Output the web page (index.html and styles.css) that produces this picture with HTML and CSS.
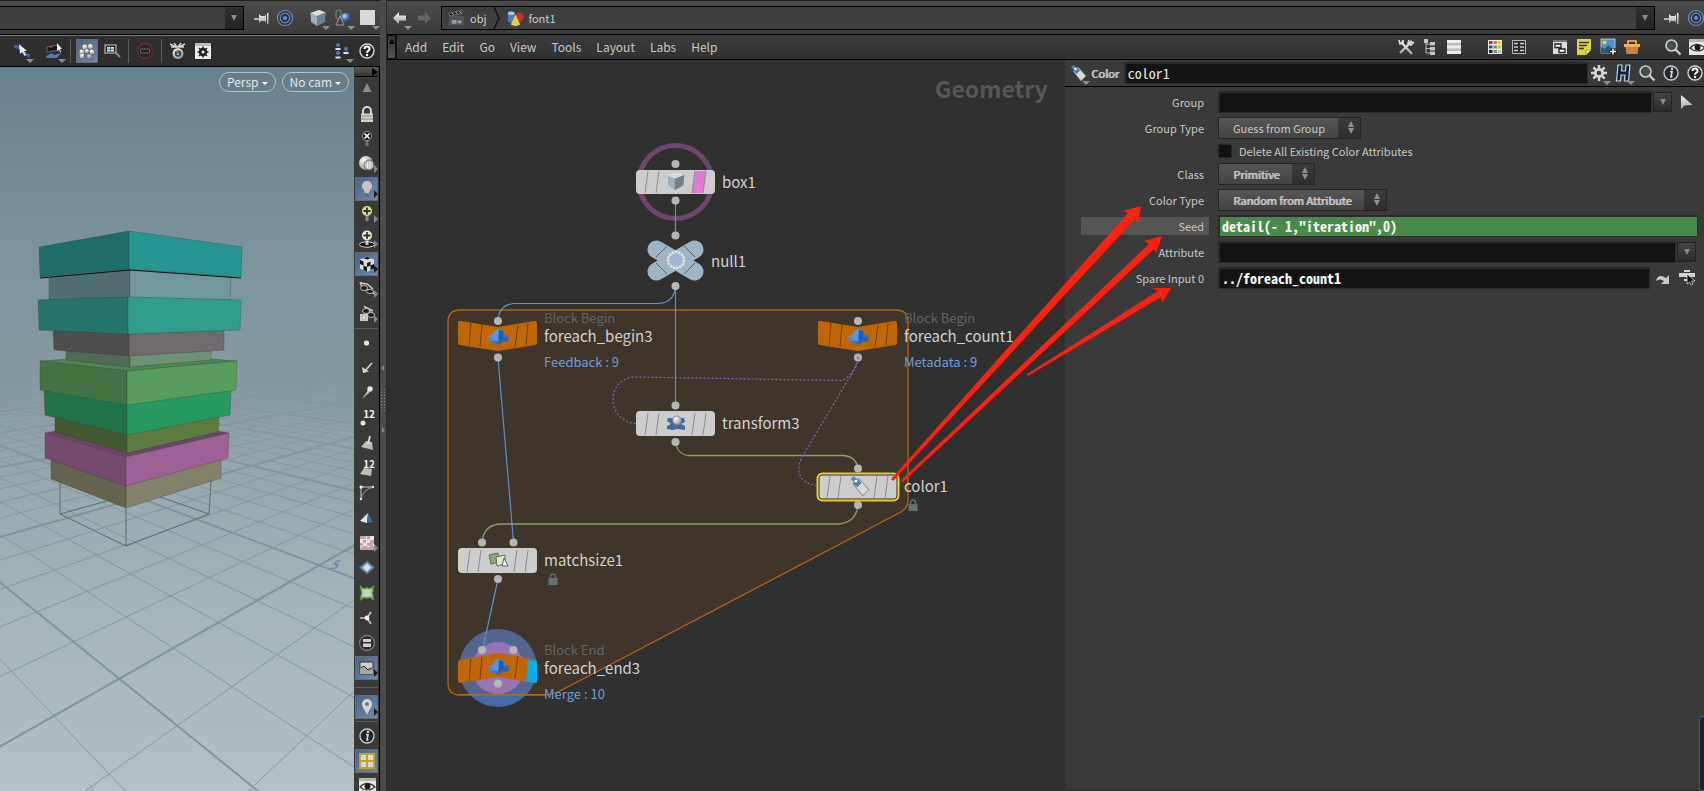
FILE: index.html
```html
<!DOCTYPE html>
<html lang="en">
<head>
<meta charset="utf-8">
<title>Geometry network – color1</title>
<link rel="stylesheet" href="styles.css">
</head>
<body>
<svg class="defs" aria-hidden="true">
  <defs>
    <linearGradient id="metal" x1="0" y1="0" x2="0" y2="1"><stop offset="0" stop-color="#f4f4f0"/><stop offset="1" stop-color="#a9a9a4"/></linearGradient>
    <linearGradient id="blueBox" x1="0" y1="0" x2="1" y2="1"><stop offset="0" stop-color="#6aa6ea"/><stop offset="1" stop-color="#1c4f9c"/></linearGradient>
    <radialGradient id="ball" cx=".35" cy=".3" r=".8"><stop offset="0" stop-color="#c8dcf8"/><stop offset=".5" stop-color="#3a68b8"/><stop offset="1" stop-color="#14305f"/></radialGradient>
    <radialGradient id="white" cx=".35" cy=".3" r=".8"><stop offset="0" stop-color="#fff"/><stop offset="1" stop-color="#8b8b86"/></radialGradient>
    <symbol id="pin" viewBox="0 0 18 18"><path d="M1 10h6" stroke="#d8d8d8" stroke-width="1.5"/><path d="M6 5l2 2h4l1.500-3h2v11h-2l-1.500-3H8l-2 2z" fill="url(#metal)"/><path d="M13.500 4v11" stroke="#222" stroke-width=".8"/></symbol>
    <symbol id="target" viewBox="0 0 18 18"><g fill="none" stroke="#6f8dc0" stroke-width="1.200"><circle cx="9" cy="9" r="7.500" fill="#2c3440"/><circle cx="9" cy="9" r="4.800"/></g><circle cx="9" cy="9" r="2" fill="#5f93e6"/></symbol>
    <symbol id="cube" viewBox="0 0 18 18"><path d="M1.500 4L10 1l6.500 2.500L15.500 13 8 17 2 13z" fill="#9fb0ba"/><path d="M1.500 4L10 1l6.500 2.500L8 7z" fill="#d3dfe6"/><path d="M8 7l8.500-3.500L15.500 13 8 17z" fill="#71808a"/></symbol>
    <symbol id="shapes" viewBox="0 0 18 18"><rect x="2" y="1" width="5" height="9" rx="2" fill="#444" stroke="#888"/><circle cx="12" cy="9" r="5" fill="url(#ball)"/><path d="M6 7l4 9H2z" fill="#444" fill-opacity=".7" stroke="#999"/></symbol>
    <symbol id="square" viewBox="0 0 18 18"><path d="M1 1h15v15H1z" fill="#d9dad7"/></symbol>
    <symbol id="snapline" viewBox="0 0 18 18"><path d="M1 4l6 2 5 6 5 2" fill="none" stroke="#3b66a5" stroke-width="3"/><path d="M6 2l1 10 2.500-2 2 4 1.500-1-2-4h3z" fill="#ececec"/></symbol>
    <symbol id="snapplane" viewBox="0 0 18 18"><path d="M1 14l6-3 2 2 7-2-4 5H2z" fill="#4e7dc2"/><path d="M2 5l12-2v5L2 10z" fill="#161616" stroke="#666"/><circle cx="6" cy="5" r="1" fill="#e33"/><path d="M12 1v8l2-1.500 1 3 1-.5-1-3h2z" fill="#ececec"/></symbol>
    <symbol id="balls" viewBox="0 0 18 18"><g fill="url(#white)" stroke="#555" stroke-width=".6"><circle cx="7" cy="5" r="3"/><circle cx="12.500" cy="4.500" r="3"/><circle cx="4" cy="10" r="3"/><circle cx="14" cy="10" r="3"/><circle cx="9" cy="9" r="2.500"/><path d="M1 12l5-1v5l-4 1zM9 12h5v5H9z"/></g></symbol>
    <symbol id="zoombox" viewBox="0 0 18 18"><path d="M2 3h11v8H2z" fill="#222" stroke="#999" stroke-width="1.500"/><path d="M4 5h7v4.500H4z" fill="#dfe9f6"/><path d="M7.500 5v4.500M4 7.200h7" stroke="#3a67b0"/><path d="M13 11l4 4" stroke="#888" stroke-width="2"/></symbol>
    <symbol id="stop" viewBox="0 0 18 18"><circle cx="9" cy="9" r="7.500" fill="#2b2526" stroke="#6b2e2e" stroke-width="1.300"/><path d="M4.500 7h9v4h-9z" fill="#222" stroke="#666"/></symbol>
    <symbol id="lens" viewBox="0 0 18 18"><path d="M1 2l6 3M5 1l3 4M16 2l-6 3M12 1L9 5M2 5h13" stroke="#d8d8d0" stroke-width="1.400"/><circle cx="9" cy="11.500" r="5.500" fill="url(#white)"/><circle cx="9" cy="11.500" r="3.200" fill="#24455c"/><path d="M7 10a3 3 0 013-1" stroke="#e87444" fill="none" stroke-width="1.300"/><circle cx="9" cy="12" r="1.300" fill="#77b6d9"/></symbol>
    <symbol id="gearbox" viewBox="0 0 18 18"><path d="M1 1h16v16H1z" fill="#ececea"/><path d="M1 1h16v3H1z" fill="#bbb"/><circle cx="9" cy="10" r="3.200" fill="none" stroke="#222" stroke-width="2"/><path d="M9 4.500v11M3.500 10h11M5 6l8 8M13 6l-8 8" stroke="#222" stroke-width="1.500"/><circle cx="9" cy="10" r="1.500" fill="#ececea"/></symbol>
    <symbol id="people" viewBox="0 0 18 18"><g fill="#4f78b9"><circle cx="5" cy="3" r="2"/><circle cx="5" cy="11" r="2"/><circle cx="13" cy="7" r="2"/></g><path d="M2.500 7h5M2.500 15.500h5M10.500 11h5" stroke="#dfe6ef" stroke-width="2"/></symbol>
    <symbol id="help" viewBox="0 0 18 18"><circle cx="9" cy="9" r="7" fill="#20262a" stroke="#d6d6d2" stroke-width="1.400"/><path d="M6.500 7a2.500 2.500 0 115 .2c0 1.600-2.500 1.500-2.500 3.500" fill="none" stroke="#fff" stroke-width="2"/><circle cx="9" cy="13" r="1.200" fill="#fff"/></symbol>
    <symbol id="info" viewBox="0 0 18 18"><circle cx="9" cy="9" r="7" fill="#20262a" stroke="#c9d0d0" stroke-width="1.300"/><path d="M8 7.500h2l-1 5.500h1.500" fill="none" stroke="#cfd8da" stroke-width="1.700"/><circle cx="10" cy="4.700" r="1.200" fill="#cfd8da"/></symbol>
    <symbol id="up" viewBox="0 0 18 18"><path d="M9 5l4.500 9h-9z" fill="#8b8b8b"/></symbol>
    <symbol id="lock" viewBox="0 0 18 18"><path d="M5 9V6a4 4 0 018 0v3" fill="none" stroke="#d8d8d4" stroke-width="2"/><path d="M3 8.500h12V17H3z" fill="#d6d2c8"/><path d="M3 11h12M3 14h12" stroke="#8c8980"/></symbol>
    <symbol id="bulbx" viewBox="0 0 18 18"><circle cx="9" cy="6" r="4.700" fill="#1b1f22" stroke="#8d9295"/><path d="M6.500 3.500l5 5m0-5l-5 5" stroke="#fff" stroke-width="1.500"/><path d="M7.500 11h3v5h-3z" fill="#777"/></symbol>
    <symbol id="spheres" viewBox="0 0 18 18"><circle cx="8" cy="8" r="7" fill="url(#white)"/><circle cx="11" cy="10" r="5" fill="#c6c6c2" stroke="#666"/><path d="M9.500 8v5M12 7v6" stroke="#eee"/></symbol>
    <symbol id="bulb" viewBox="0 0 18 18"><path d="M9 1a5 5 0 00-3 9l1 3h4l1-3a5 5 0 00-3-9z" fill="#c6c7c4"/><path d="M7.500 13.500h3V17h-3z" fill="#65696c"/></symbol>
    <symbol id="bulbplus" viewBox="0 0 18 18"><circle cx="9" cy="6" r="5" fill="#e0dd84"/><path d="M9 2.500v7M5.500 6h7" stroke="#333" stroke-width="1.800"/><path d="M7.500 11h3v5h-3z" fill="#888"/></symbol>
    <symbol id="bulbdisc" viewBox="0 0 18 18"><ellipse cx="9" cy="14.500" rx="7.500" ry="2.700" fill="#0d0d0d" stroke="#ddd"/><circle cx="9" cy="5.500" r="5" fill="#f0efc9"/><path d="M9 2v7M5.500 5.500h7" stroke="#333" stroke-width="1.800"/><path d="M7.500 10.500h3V15h-3z" fill="#ccc"/></symbol>
    <symbol id="checkcube" viewBox="0 0 18 18"><path d="M2 4.500L9 2l7 2.500v9L9 17l-7-3.500z" fill="#dcdcdc"/><path d="M5.500 3.300L9 4.500l3.500-1.200L9 2zM2 5l3.500 1.500v4L2 9zM5.500 10.500L9 12v5l-3.500-2zM9 8l3.500-1.500v4L9 12zM12.500 10.500L16 9v4.500L12.500 15z" fill="#151515"/></symbol>
    <symbol id="glasses" viewBox="0 0 18 18"><path d="M2 2l3 7 5 1 7 4M3 3l6 1 6 5" fill="none" stroke="#cfcfcb" stroke-width="1.500"/><ellipse cx="6" cy="8" rx="3.500" ry="2.500" fill="#1c1c1c" stroke="#bbb"/><ellipse cx="12" cy="11.500" rx="3.500" ry="2" fill="#1c1c1c" stroke="#bbb"/></symbol>
    <symbol id="glassplay" viewBox="0 0 18 18"><path d="M6 1l5 5 6 4M7 2l8 4" fill="none" stroke="#cfcfcb" stroke-width="1.500"/><ellipse cx="8" cy="6" rx="3.500" ry="2.500" fill="#1c1c1c" stroke="#bbb"/><ellipse cx="13" cy="10" rx="3.500" ry="2.500" fill="#1c1c1c" stroke="#bbb"/><path d="M2 9h8v7H2z" fill="#c9c9c4"/><path d="M4.500 10.500v4l3.500-2z" fill="#fff" stroke="#888" stroke-width=".5"/></symbol>
    <symbol id="point" viewBox="0 0 18 18"><circle cx="8.500" cy="9" r="2.600" fill="#e8e8e2"/></symbol>
    <symbol id="vector" viewBox="0 0 18 18"><path d="M14 4L6 13" stroke="#d5d5d0" stroke-width="1.600"/><path d="M4 8l1 6 6-1.500z" fill="#d5d5d0"/></symbol>
    <symbol id="needle" viewBox="0 0 18 18"><path d="M4 15l6-9 2 2z" fill="#bbb"/><circle cx="12" cy="5" r="2.700" fill="#e8e8e2"/></symbol>
    <symbol id="dot" viewBox="0 0 18 18"><circle cx="5" cy="14" r="2.500" fill="#e8e8e2"/></symbol>
    <symbol id="polyarrow" viewBox="0 0 18 18"><path d="M3 13l5-6 6 1 1 8z" fill="#bdbdb8"/><path d="M10 10l2-8" stroke="#e5e5e0" stroke-width="1.700"/></symbol>
    <symbol id="polybase" viewBox="0 0 18 18"><path d="M2 15l4-6 8 1-1 7z" fill="#bdbdb8"/></symbol>
    <symbol id="hull" viewBox="0 0 18 18"><path d="M3 16V3h12" fill="none" stroke="#c8c8c4"/><path d="M3 16Q4 6 15 3" fill="none" stroke="#999"/><circle cx="3" cy="3" r="1.500" fill="#fff"/><circle cx="15" cy="3" r="1.200" fill="#ddd"/><circle cx="3" cy="15" r="1.200" fill="#ddd"/></symbol>
    <symbol id="backface" viewBox="0 0 18 18"><path d="M10 4l-8 8 7 2z" fill="#dde6ee"/><path d="M10 4l5 9-6 1z" fill="#3a6aa5"/></symbol>
    <symbol id="uv" viewBox="0 0 18 18"><path d="M2 2h14v14H2z" fill="#e7e4ea"/><path d="M2 2h3v3H2zM9 2h3v3H9zM5 6h3v3H5zM12 6h4v3h-4zM2 9h3v3H2zM9 9h3v3H9zM5 12h4v4H5zM12 12h4v4h-4z" fill="#d99c9c"/><path d="M5 2h3v3H5zM12 9h3v3h-3zM9 13h3v3H9zM2 13h3v3H2z" fill="#9db5d8"/></symbol>
    <symbol id="diamond" viewBox="0 0 18 18"><path d="M9 2.500l7 6-7 6-7-6z" fill="#8b9aa8" stroke="#4a7dc0" stroke-width="1.300"/><path d="M9 4.500l4 4-4 4-4-4z" fill="#e0e0dc"/></symbol>
    <symbol id="green" viewBox="0 0 18 18"><path d="M3 3q3 3 6 1 3 2 6-1 0 4-1 6 1 2 1 6-3-3-6-1-3-2-6 1 0-4 1-6-1-3-1-6z" fill="#c8d0c3" stroke="#5fae3c" stroke-width="1.600"/></symbol>
    <symbol id="axes" viewBox="0 0 18 18"><path d="M2 9h7l4-6M9 9l4 6" fill="none" stroke="#c9c9c5" stroke-width="1.600"/><circle cx="9" cy="9" r="2.400" fill="#f0f0ec"/></symbol>
    <symbol id="circlebars" viewBox="0 0 18 18"><circle cx="9" cy="9" r="7.500" fill="#2c2c2c" stroke="#777" stroke-width="1.300"/><path d="M5 5h8v3H5zM5 9.500h8v3.500H5z" fill="#d0d0cc"/></symbol>
    <symbol id="picture" viewBox="0 0 18 18"><path d="M2 3h13v12H2z" fill="#cfcfcb" stroke="#333"/><path d="M2 11l4-4 4 3 2-2 3 3v4H2z" fill="#a4a6a5"/><path d="M3 9l3-2 4 4 4-2" stroke="#222" fill="none"/></symbol>
    <symbol id="marker" viewBox="0 0 18 18"><path d="M9 17C8 13 4 10 4 6a5 5 0 0110 0c0 4-4 7-5 11z" fill="#d5d6d2"/><circle cx="9" cy="6" r="2" fill="#6c7c90"/></symbol>
    <symbol id="quad" viewBox="0 0 18 18"><path d="M2 2h14v14H2z" fill="#d9d9d9" stroke="#c9a31c" stroke-width="1.800"/><path d="M9 2v14M2 9h14" stroke="#c9a31c" stroke-width="2"/></symbol>
    <symbol id="eye" viewBox="0 0 18 18"><path d="M1 1h17v16H1z" fill="#e6e6e3"/><path d="M1 1h17v3H1z" fill="#b5b5b2"/><path d="M2 10q7-7 15 0-8 6-15 0z" fill="#fff" stroke="#333" stroke-width="1.200"/><circle cx="9.500" cy="9.500" r="3" fill="#1d1d1d"/></symbol>
    <symbol id="back" viewBox="0 0 18 18"><path d="M2 9l6-6v3.500h7v5H8V15z" fill="url(#metal)"/></symbol>
    <symbol id="forward" viewBox="0 0 18 18"><path d="M16 9l-6-6v3.500H3v5h7V15z" fill="#666"/></symbol>
    <symbol id="clapper" viewBox="0 0 18 18"><path d="M1 4l14-3v3L2 7zM2 8h14v2H2z" fill="#222" stroke="#888" stroke-width=".7"/><path d="M4 3.500l2 2M8 2.500l2 2M12 2l2 2" stroke="#ccc"/><path d="M1 8h16v9H1z" fill="#4a5357"/><path d="M4 11h5v4H4zM10 12l4-1v4l-4-1z" fill="#95a0a4"/></symbol>
    <symbol id="primitives" viewBox="0 0 18 18"><path d="M1 4a3.500 2 0 017 0v8a3.500 2 0 01-7 0z" fill="#4d7cba"/><ellipse cx="4.500" cy="4" rx="3.500" ry="2" fill="#aac6e8"/><circle cx="13" cy="8" r="4.700" fill="#c43324"/><path d="M9 5l5 11q-5 3-10 0z" fill="#e6cf3c"/></symbol>
    <symbol id="tools" viewBox="0 0 18 18"><path d="M4 4l11 12M15 3L3 15" stroke="url(#metal)" stroke-width="2.300"/><path d="M2 2l1 4 3-1V2M12 2l-1 4 3 1 3-3" fill="none" stroke="#ddd" stroke-width="1.700"/></symbol>
    <symbol id="tree" viewBox="0 0 18 18"><path d="M5 2v13h5M5 6h5M5 10.500h5" fill="none" stroke="#bbb"/><path d="M3 1h4v4H3zM9 4h5v3.500H9zM9 9h5v3.500H9zM9 13.500h5V17H9z" fill="#c5c5c1"/></symbol>
    <symbol id="rows" viewBox="0 0 18 18"><path d="M2 2h14v14H2z" fill="#b9b9b5"/><path d="M2 2h14v3H2zM2 7.500h14v3H2zM2 13h14v3H2z" fill="#ededea"/></symbol>
    <symbol id="palette" viewBox="0 0 18 18"><path d="M2 2h14v14H2z" fill="#f1f1f1"/><path d="M3 3h3.500v3H3z" fill="#d22"/><path d="M7.500 3H11v3H7.500z" fill="#e87b10"/><path d="M12 3h3v3h-3z" fill="#edc80c"/><path d="M3 7.500h3.500v3H3z" fill="#23519c"/><path d="M7.500 7.500H11v3H7.500z" fill="#4aa53c"/><path d="M12 7.500h3v3h-3z" fill="#b7c91c"/><path d="M3 12h3.500v3H3z" fill="#222"/><path d="M7.500 12H11v3H7.500z" fill="#888"/><path d="M12 12h3v3h-3z" fill="#bbb"/></symbol>
    <symbol id="table" viewBox="0 0 18 18"><path d="M2.500 2.500h13v13h-13z" fill="#2a2a2a" stroke="#bbb"/><path d="M4 5.500h4M10 5.500h4M4 9h4M10 9h4M4 12.500h4M10 12.500h4" stroke="#ccc" stroke-width="1.500"/></symbol>
    <symbol id="netbox" viewBox="0 0 18 18"><path d="M2 2h14v14H2z" fill="#ddd"/><path d="M2 2h14v2H2z" fill="#777"/><path d="M4 6h6v3.500H4zM8 11h6v3.500H8z" fill="#fff" stroke="#222" stroke-width="1.300"/></symbol>
    <symbol id="note" viewBox="0 0 18 18"><path d="M2 1h14v11l-5 5H2z" fill="#e2d344"/><path d="M11 17v-5h5z" fill="#fff29a" stroke="#8c8220" stroke-width=".7"/><path d="M4 4.500h10M4 7.500h8M4 10.500h5" stroke="#333" stroke-width="1.300"/></symbol>
    <symbol id="image" viewBox="0 0 18 18"><path d="M2 1h14v14H2z" fill="#4a93cf" stroke="#cfd8de" stroke-width=".8"/><circle cx="5.500" cy="4.500" r="2" fill="#ecd63c"/><path d="M2 15V9l4 2 3-4 7 6v2z" fill="#2d5a78"/><path d="M14 10v7M10.500 13.500h7" stroke="#111" stroke-width="3.500"/><path d="M14 10.500v6M11 13.500h6" stroke="#fff" stroke-width="1.500"/></symbol>
    <symbol id="basket" viewBox="0 0 18 18"><path d="M5 6V3h8v3" fill="none" stroke="#d99843" stroke-width="2"/><path d="M1 6h16v3H1z" fill="#f0b057"/><path d="M2.500 9h13l-1 7h-11z" fill="#c88432"/></symbol>
    <symbol id="search" viewBox="0 0 18 18"><circle cx="7.500" cy="7.500" r="5.500" fill="#3f4f52" stroke="#c9cfcf" stroke-width="1.600"/><path d="M11.500 11.500l5 5" stroke="#c9c9c5" stroke-width="2.400"/></symbol>
    <symbol id="tube" viewBox="0 0 18 18"><path d="M2 3l3-2 3 3-3 2z" fill="#5c86bb"/><path d="M4 7l5-4 8 9-5 5z" fill="#d9dadb" stroke="#7b8085" stroke-width=".8"/><path d="M4.500 7l4-3.500 2.500 3L7.500 10z" fill="#4d7cba"/><circle cx="6.500" cy="5" r="1.200" fill="#fff"/></symbol>
    <symbol id="gear" viewBox="0 0 18 18"><path d="M9 1v16M1 9h16M3.300 3.300l11.400 11.400M14.700 3.300L3.300 14.700" stroke="#d6d6d2" stroke-width="2.400"/><circle cx="9" cy="9" r="5" fill="#d6d6d2"/><circle cx="9" cy="9" r="2.300" fill="#3a3a3a"/></symbol>
    <symbol id="hlogo" viewBox="0 0 18 18"><path d="M4 1h4L7.500 7h4L12 1h4l-1.500 16h-4l.5-6H7l-.5 6h-4z" fill="#0c2140" stroke="#c6d4e0" stroke-width="1.200"/></symbol>
    <symbol id="cursor" viewBox="0 0 18 18"><path d="M5 2v14l3.500-3.500 8-.5z" fill="url(#metal)"/></symbol>
    <symbol id="jump" viewBox="0 0 18 18"><path d="M2 12q2-8 10-3l3-3v9H7l3-3q-4-3-8 0z" fill="#c9c9c6"/></symbol>
    <symbol id="opchoose" viewBox="0 0 18 18"><path d="M6 1h6v2H6zM1 4h16v4H1zM6 10h4v2H6z" fill="#d4d4d1"/><path d="M9 5v10l2.500-2 1.500 3 2-1-1.500-3H17z" fill="#111" stroke="#eee" stroke-width=".7"/></symbol>
    <symbol id="forblock" viewBox="0 0 20 18"><path d="M5 5q0-3 5-4 4 0 5 3v3h5v6l-5 1-5 3-4-2-6-1V8l5-2z" fill="url(#blueBox)"/><path d="M10 2q5 0 5 3v6l-5 3z" fill="#1d5cb4"/><path d="M5 5q0-3 5-3.500V13l-7-1z" fill="#5596e2"/></symbol>
    <symbol id="nodelock" viewBox="0 0 10 12"><path d="M2.500 6V3.500a2.500 2.500 0 015 0V6" fill="none" stroke="#66716f" stroke-width="1.400"/><path d="M.5 5h9v7h-9z" fill="#66716f"/></symbol>
    <symbol id="flags" viewBox="0 0 80 26"><path d="M12 2L9 24M23 2l-3 22M59 2l-3 22M70 2l-3 22" stroke="#8c8c8c" fill="none"/></symbol>
  </defs>
</svg>

<main class="desk">
  <section class="scene" aria-label="Scene view">
    <div class="pathbar">
      <div class="path"><input class="path-input" aria-label="Scene path"><button class="path-drop" aria-label="Recent paths"></button></div>
      <div class="tools tight">
        <button class="tool" aria-label="Pin"><svg><use href="#pin"/></svg></button>
        <button class="tool" aria-label="Link"><svg><use href="#target"/></svg></button>
      </div>
      <div class="tools">
        <button class="tool menu" aria-label="Geometry"><svg><use href="#cube"/></svg></button>
        <button class="tool menu" aria-label="Objects"><svg><use href="#shapes"/></svg></button>
        <button class="tool menu" aria-label="Layout"><svg><use href="#square"/></svg></button>
      </div>
    </div>
    <div class="toolbar">
      <div class="tools wide">
        <button class="tool menu" aria-label="Snap to curve"><svg><use href="#snapline"/></svg></button>
        <button class="tool menu" aria-label="Construction plane"><svg><use href="#snapplane"/></svg></button>
      </div>
      <i class="sep"></i>
      <div class="tools">
        <button class="tool on" aria-label="Select points"><svg><use href="#balls"/></svg></button>
        <button class="tool" aria-label="Zoom box"><svg><use href="#zoombox"/></svg></button>
      </div>
      <i class="sep"></i>
      <button class="tool" aria-label="Stop"><svg><use href="#stop"/></svg></button>
      <i class="sep"></i>
      <div class="tools">
        <button class="tool" aria-label="Camera"><svg><use href="#lens"/></svg></button>
        <button class="tool" aria-label="Settings"><svg><use href="#gearbox"/></svg></button>
      </div>
      <div class="tools end">
        <button class="tool menu" aria-label="Groups"><svg><use href="#people"/></svg></button>
        <button class="tool" aria-label="Help"><svg><use href="#help"/></svg></button>
      </div>
    </div>
    <div class="view-row">
      <div class="viewport">
        <svg class="fill" aria-label="Stacked coloured boxes">
          <defs>
            <linearGradient id="fade" gradientUnits="userSpaceOnUse" x1="0" y1="350" x2="0" y2="480"><stop offset="0" stop-color="#000"/><stop offset=".3" stop-color="#777"/><stop offset="1" stop-color="#fff"/></linearGradient>
            <mask id="haze" maskUnits="userSpaceOnUse" x="0" y="350" width="2000" height="2000"><rect x="0" y="350" width="2000" height="2000" fill="url(#fade)"/></mask>
          </defs>
          <g transform="translate(0 -67)">
            <g mask="url(#haze)"><g id="grid"></g></g>
            <path d="M60 482v32l66 32v-40M211 481l-2 33-83 32M60 514l47-13M160 497l49 17" fill="none" stroke="#5f6b6e"/>
            <g stroke="#333" stroke-opacity=".35" stroke-width=".8">
              <path d="M51 459l75 26v23l-75-29z" fill="#65624d"/><path d="M221 459l-95 26v23l95-30z" fill="#84816a"/>
              <path d="M45 433l11-2 71 22 91-22 11 2-103 24z" fill="#6c4567"/>
              <path d="M45 433l81 24v29l-81-28z" fill="#744a6f"/><path d="M229 433l-103 24v29l102-28z" fill="#9c6295"/>
              <path d="M55 416l72 18v19l-72-21z" fill="#425a2e"/><path d="M219 416l-92 18v19l91-21z" fill="#5b7b3f"/>
              <path d="M44 390l83 14v31l-82-20z" fill="#207349"/><path d="M231 390l-104 14v31l103-20z" fill="#279a62"/>
              <path d="M40 361l26-2 63 8 82-8 26 2-110 10z" fill="#4b8850"/>
              <path d="M66 351l64 4v12l-64-7z" fill="#536a56"/><path d="M211 351l-81 4v12l81-7z" fill="#6f9275"/>
              <path d="M40 361l87 10v34l-87-15z" fill="#437345"/><path d="M237 361l-110 10v34l109-15z" fill="#579e5d"/>
              <path d="M53 330l76 4v22l-75-6z" fill="#504d4f"/><path d="M224 330l-95 4v22l95-6z" fill="#6f6b6f"/>
              <path d="M49 277l81-8v29l-81 2z" fill="#516d70"/><path d="M231 277l-101-8v29l100 2z" fill="#70979b"/>
              <path d="M38 300l90-3v37l-89-4z" fill="#26756b"/><path d="M241 300l-113-3v37l112-4z" fill="#319e8d"/>
              <path d="M39 247l90-16v38l-89 8z" fill="#1e6d6a"/><path d="M242 247l-113-16v38l112 8z" fill="#25968f"/>
            </g>
            <path d="M40 278l90-8 111 8" fill="none" stroke="#111"/>
            <text class="gridnum" transform="translate(330 569) skewX(-30)">5</text>
          </g>
        </svg>
        <div class="pills"><button class="pill">Persp</button><button class="pill">No cam</button></div>
      </div>
      <div class="sidebar">
        <button class="side-tab" aria-label="Expand toolbar"></button>
        <button class="side-up" aria-label="Scroll up"><svg><use href="#up"/></svg></button>
        <button class="side" aria-label="Lock camera"><svg><use href="#lock"/></svg></button>
        <button class="side" aria-label="No lighting"><svg><use href="#bulbx"/></svg></button>
        <button class="side more" aria-label="Materials"><svg><use href="#spheres"/></svg></button>
        <button class="side more on" aria-label="Headlight"><svg><use href="#bulb"/></svg></button>
        <button class="side more" aria-label="Normal lighting"><svg><use href="#bulbplus"/></svg></button>
        <button class="side more" aria-label="High quality lighting"><svg><use href="#bulbdisc"/></svg></button>
        <button class="side more on" aria-label="Shading"><svg><use href="#checkcube"/></svg></button>
        <button class="side more" aria-label="Visibility"><svg><use href="#glasses"/></svg></button>
        <button class="side more" aria-label="Playback visibility"><svg><use href="#glassplay"/></svg></button>
        <i class="rule near"></i>
        <button class="side" aria-label="Points"><svg><use href="#point"/></svg></button>
        <button class="side" aria-label="Point normals"><svg><use href="#vector"/></svg></button>
        <button class="side" aria-label="Point trails"><svg><use href="#needle"/></svg></button>
        <button class="side num" aria-label="Point numbers"><svg><use href="#dot"/></svg><span>12</span></button>
        <button class="side" aria-label="Primitive normals"><svg><use href="#polyarrow"/></svg></button>
        <button class="side num" aria-label="Primitive numbers"><svg><use href="#polybase"/></svg><span>12</span></button>
        <button class="side" aria-label="Hulls"><svg><use href="#hull"/></svg></button>
        <button class="side" aria-label="Backfaces"><svg><use href="#backface"/></svg></button>
        <button class="side more" aria-label="UV"><svg><use href="#uv"/></svg></button>
        <button class="side" aria-label="Field"><svg><use href="#diamond"/></svg></button>
        <button class="side" aria-label="Bounds"><svg><use href="#green"/></svg></button>
        <button class="side" aria-label="Axes"><svg><use href="#axes"/></svg></button>
        <button class="side" aria-label="Group list"><svg><use href="#circlebars"/></svg></button>
        <button class="side more on" aria-label="Background image"><svg><use href="#picture"/></svg></button>
        <i class="rule"></i>
        <button class="side more on" aria-label="Marker"><svg><use href="#marker"/></svg></button>
        <i class="rule near"></i>
        <button class="side" aria-label="Info"><svg><use href="#info"/></svg></button>
        <button class="side on" aria-label="Grid"><svg><use href="#quad"/></svg></button>
        <button class="side" aria-label="Display options"><svg><use href="#eye"/></svg></button>
      </div>
    </div>
  </section>

  <div class="splitter"><svg class="fill"><path d="M4 365v6l-3-3zM2 427v6l3-3z" fill="#888"/><path d="M1.500 389v22M4.500 389v22" stroke="#858585" stroke-dasharray="1 2"/></svg></div>

  <section class="editor" aria-label="Network editor">
    <div class="pathbar right">
      <div class="tools nav">
        <button class="tool menu" aria-label="Back"><svg><use href="#back"/></svg></button>
        <button class="tool" aria-label="Forward"><svg><use href="#forward"/></svg></button>
      </div>
      <div class="path crumbs">
        <a class="crumb" href="#obj"><svg class="crumb-icon"><use href="#clapper"/></svg>obj</a>
        <svg class="chevron" viewBox="0 0 8 22"><path d="M1 0l5 11-5 11" fill="none" stroke="#111" stroke-width="1.500"/></svg>
        <a class="crumb" href="#font1"><svg class="crumb-icon"><use href="#primitives"/></svg>font1</a>
        <button class="path-drop" aria-label="Recent networks"></button>
      </div>
      <div class="tools edge">
        <button class="tool" aria-label="Pin"><svg><use href="#pin"/></svg></button>
        <button class="tool" aria-label="Link"><svg><use href="#target"/></svg></button>
      </div>
    </div>
    <div class="menubar">
      <button class="handle" aria-label="Collapse"></button>
      <nav class="menus">
        <button>Add</button><button>Edit</button><button>Go</button><button>View</button><button>Tools</button><button>Layout</button><button>Labs</button><button>Help</button>
      </nav>
      <div class="tool-groups">
        <div class="tools">
          <button class="tool" aria-label="Tools"><svg><use href="#tools"/></svg></button>
          <button class="tool" aria-label="Tree"><svg><use href="#tree"/></svg></button>
          <button class="tool" aria-label="List"><svg><use href="#rows"/></svg></button>
        </div>
        <div class="tools">
          <button class="tool" aria-label="Palette"><svg><use href="#palette"/></svg></button>
          <button class="tool" aria-label="Table"><svg><use href="#table"/></svg></button>
        </div>
        <div class="tools">
          <button class="tool" aria-label="Network box"><svg><use href="#netbox"/></svg></button>
          <button class="tool" aria-label="Sticky note"><svg><use href="#note"/></svg></button>
          <button class="tool" aria-label="Background image"><svg><use href="#image"/></svg></button>
          <button class="tool" aria-label="Gallery"><svg><use href="#basket"/></svg></button>
        </div>
        <div class="tools">
          <button class="tool" aria-label="Find"><svg><use href="#search"/></svg></button>
          <button class="tool" aria-label="Display options"><svg><use href="#eye"/></svg></button>
        </div>
      </div>
    </div>

    <div class="work">
      <div class="network">
        <svg class="fill" aria-label="Node graph">
          <g transform="translate(-387 -60)">
            <text class="context" x="935" y="98">Geometry</text>
            <circle cx="498" cy="668" r="39" fill="#456aa4"/>
            <path d="M460 310H896q12 0 12 12V500q0 8-7 12L560 691q-8 4-16 4H460q-12 0-12-12V322q0-12 12-12z" fill="#3f352b" stroke="#b4660c" stroke-width="1.300"/>
            <clipPath id="inBlock"><path d="M448 600h120v94H448z"/></clipPath>
            <circle cx="498" cy="668" r="39" fill="#52668f" clip-path="url(#inBlock)"/>
            <circle cx="498" cy="668" r="26" fill="#9873b6"/>
            <path d="M459 694.500h86" stroke="#a96d28" fill="none"/>
            <circle cx="675.500" cy="182" r="36.500" fill="none" stroke="#72456f" stroke-width="5"/>
            <g fill="none" stroke="#5f8fca" stroke-width="1.200">
              <path d="M675.500 200v35M675.500 286v119M675.500 286q-1 17-18 17.500H514q-15 1-16 17M498 358l15.500 184M498 579l-15.500 71"/>
            </g>
            <g fill="none" stroke="#8aa065" stroke-width="1.300"><path d="M675.500 442q2 13 14 13.500H844q12 1 14 13M858 505q-2 18-20 19H502q-18 0-20 18"/></g>
            <g fill="none" stroke="#8463c4" stroke-width="1.200" stroke-dasharray="2 2"><path d="M636 423.500c-30-2-31-45-1-46.500l205 3.500q12-1 18-22M858 358q0 8-12 25l-39 66c-14 19-10 34 11 37"/></g>
            <g fill="#cdcdcd"><rect x="636" y="170" width="79" height="24" rx="4"/><rect x="636" y="411" width="79" height="25" rx="4"/><rect x="458" y="548" width="79" height="25" rx="4"/></g>
            <path d="M695 171h11l-3 22h-11z" fill="#e07ad8"/>
            <rect x="817.500" y="473.500" width="81" height="27" rx="5" fill="#cdcdcd" stroke="#f5cf0a" stroke-width="2"/><rect x="819" y="475" width="78" height="24" rx="3" fill="none" stroke="#333" stroke-width="1"/>
            <g><use href="#flags" x="636" y="169" width="80" height="26"/><use href="#flags" x="636" y="411" width="80" height="26"/><use href="#flags" x="458" y="548" width="80" height="26"/><use href="#flags" x="818" y="474" width="80" height="26"/></g>
            <g fill="#c06600" stroke="#c06600" stroke-width="4" stroke-linejoin="round">
              <path d="M460 323l38 6 37-6v20l-37 6-38-6z"/><path d="M820 323l38 6 37-6v20l-37 6-38-6z"/><path d="M460 662l38-7 37 7v19l-37-6-38 6z"/>
            </g>
            <g fill="none" stroke="#6d3c06"><path d="M471 323l-2 22M482 325l-2 22M518 325l-3 22M528 323l-2 22M831 323l-2 22M842 325l-2 22M878 325l-3 22M888 323l-2 22M471 659l-2 22M482 657l-2 22M518 656l-3 22"/></g>
            <path d="M528 660l9 1v22l-11-2z" fill="#00aef2"/>
            <use href="#forblock" x="488" y="328" width="21" height="18"/><use href="#forblock" x="848" y="328" width="21" height="18"/><use href="#forblock" x="488" y="658" width="21" height="18"/>
            <use href="#cube" x="666" y="171" width="20" height="20"/>
            <path d="M668 418h16l1 4-4 2 4 2v4l-8-1-4 1-6-1v-3l4-2-4-3z" fill="#44699c"/><circle cx="677" cy="420.500" r="4.500" fill="url(#white)" stroke="#777" stroke-width=".7"/>
            <path d="M489 555l9-2 1 9-8 2z" fill="#8fa580" stroke="#5d7350"/><path d="M496 557l9-2v9l-8 2z" fill="#dbe6d0" stroke="#5d7350"/><path d="M504 558l4 8h-6z" fill="#eee" stroke="#666"/>
            <use href="#tube" x="848" y="475" width="22" height="22"/>
            <g stroke="#9fb5c6" stroke-width="18" stroke-linecap="round"><path d="M656.500 249.500l38 22M694.500 249.500l-38 22"/></g>
            <path d="M656 257l11-11M684 246l11 11M656 263l11 11M684 274l11-11" stroke="#56646f"/>
            <circle cx="676" cy="260" r="8" fill="#9fb8cf" stroke="#e2e6e8" stroke-width="2.500" stroke-dasharray="2.500 .8"/>
            <g fill="#b6b6b6"><circle cx="675.500" cy="164" r="4"/><circle cx="675.500" cy="200.500" r="4"/><circle cx="675.500" cy="235.500" r="4"/><circle cx="675.500" cy="286" r="4"/><circle cx="498" cy="321" r="4"/><circle cx="498" cy="357.500" r="4"/><circle cx="858" cy="321" r="4"/><circle cx="858" cy="357.500" r="4"/><circle cx="675.500" cy="405.500" r="4"/><circle cx="675.500" cy="442" r="4"/><circle cx="858" cy="468.500" r="4"/><circle cx="858" cy="505" r="4"/><circle cx="482" cy="542.500" r="4"/><circle cx="513.500" cy="542.500" r="4"/><circle cx="498" cy="579" r="4"/><circle cx="482" cy="650" r="4"/><circle cx="513.500" cy="650" r="4"/><circle cx="498" cy="683.500" r="4"/></g>
            <circle cx="858" cy="358" r="1.500" fill="#9a7ad0"/>
            <use href="#nodelock" x="908" y="499" width="10" height="12"/><use href="#nodelock" x="548" y="573" width="10" height="12"/>
            <g class="name"><text x="722" y="188">box1</text><text x="711" y="267">null1</text><text x="544" y="342">foreach_begin3</text><text x="904" y="342">foreach_count1</text><text x="722" y="429">transform3</text><text x="904" y="492">color1</text><text x="544" y="566">matchsize1</text><text x="544" y="674">foreach_end3</text></g>
            <g class="kind"><text x="544" y="323">Block Begin</text><text x="904" y="323">Block Begin</text><text x="544" y="655">Block End</text></g>
            <g class="info"><text x="544" y="367">Feedback : 9</text><text x="904" y="367">Metadata : 9</text><text x="544" y="699">Merge : 10</text></g>
          </g>
        </svg>
      </div>

      <form class="params">
        <div class="params-head">
          <button type="button" class="tool menu" aria-label="Color node"><svg><use href="#tube"/></svg></button>
          <label class="op" for="opname">Color</label>
          <input class="field mono" id="opname" value="color1">
          <div class="tools end-head">
            <button type="button" class="tool menu" aria-label="Gear menu"><svg><use href="#gear"/></svg></button>
            <button type="button" class="tool menu" aria-label="Houdini help"><svg><use href="#hlogo"/></svg></button>
            <button type="button" class="tool" aria-label="Search"><svg><use href="#search"/></svg></button>
            <button type="button" class="tool" aria-label="Info"><svg><use href="#info"/></svg></button>
            <button type="button" class="tool" aria-label="Help"><svg><use href="#help"/></svg></button>
          </div>
        </div>
        <div class="rows">
          <div class="row"><label for="group">Group</label><input class="field" id="group"><button type="button" class="drop" aria-label="Group list"></button><button type="button" class="tool pick" aria-label="Pick group"><svg><use href="#cursor"/></svg></button></div>
          <div class="row"><label for="gtype">Group Type</label><span class="select"><select id="gtype"><option>Guess from Group</option></select></span></div>
          <div class="row check"><span></span><input type="checkbox" id="del"><label for="del">Delete All Existing Color Attributes</label></div>
          <div class="row"><label for="class">Class</label><span class="select strong"><select id="class"><option>Primitive</option></select></span></div>
          <div class="row"><label for="ctype">Color Type</label><span class="select strong"><select id="ctype"><option>Random from Attribute</option></select></span></div>
          <div class="row seed"><label for="seed">Seed</label><input class="field mono expr" id="seed" value='detail(- 1,"iteration",0)'></div>
          <div class="row"><label for="attr">Attribute</label><input class="field" id="attr"><button type="button" class="drop last" aria-label="Attribute list"></button></div>
          <div class="row spare"><label for="spare">Spare Input 0</label><input class="field mono bold" id="spare" value="../foreach_count1"><button type="button" class="tool" aria-label="Jump to operator"><svg><use href="#jump"/></svg></button><button type="button" class="tool" aria-label="Choose operator"><svg><use href="#opchoose"/></svg></button></div>
        </div>
      </form>
    </div>
  </section>
</main>

<div class="peek"></div>
<svg class="arrows" aria-hidden="true">
  <g fill="#ff2010">
    <path d="M891 479L1128 213l-5-2 18-5-3 17-3-4L893 481z"/>
    <path d="M901 480L1149 244l-5-3 18-5-6 17-2-4L903 482z"/>
    <path d="M1027 374L1158 291l-6-3h19l-9 15-1-6-133 79z"/>
  </g>
</svg>
<script src="grid.js"></script>
</body>
</html>
```

FILE: styles.css
```css
* { box-sizing: border-box; }
html, body { height: 100%; }
body { margin: 0; overflow: hidden; background: #3a3a3a; color: #c8c8c8; font: 11px/18px "Noto Sans CJK SC", "Noto Sans", sans-serif; }
button, input, select { font: inherit; color: inherit; margin: 0; padding: 0; border: 0; background: none; border-radius: 0; outline: 0; }
.defs { position: absolute; width: 0; height: 0; }
.fill { display: block; width: 100%; height: 100%; }

.desk { display: grid; grid-template-columns: 380fr 7px 1317fr; height: 100vh; }
.scene, .editor { display: flex; flex-direction: column; min-width: 0; min-height: 0; overflow: hidden; }

.pathbar { display: flex; align-items: center; flex: 0 0 35px; padding: 1px 1px 0 0; gap: 11px; background: linear-gradient(#4b4b4b, #3b3b3b); border-top: 1px solid #222; border-bottom: 1px solid #000; }
.path { display: flex; align-items: stretch; flex: 1; min-width: 0; height: 24px; border: 1px solid #000; background: linear-gradient(#3c3c3c, #414141); }
.scene .path { border-left: 0; margin-right: -4px; }
.path-input { flex: 1; min-width: 0; }
.path-drop { flex: 0 0 18px; margin-left: auto; background: linear-gradient(#303030, #242424); }
.path-drop::after, .drop::after { content: ""; display: block; width: 0; margin: auto; border: 3px solid transparent; border-top: 6px solid #8a8a8a; border-bottom: 0; }

.tools { display: flex; align-items: center; gap: 3px; }
.tools.tight { gap: 1px; }
.tools.wide { gap: 10px; }
.tools.end { margin-left: auto; }
.tool { position: relative; flex: 0 0 22px; height: 24px; display: grid; place-items: center; }
.tool svg, .side svg { width: 18px; height: 18px; display: block; }
.tool.menu::after { content: ""; position: absolute; right: -1px; bottom: 0; border: 4px solid transparent; border-top-color: #8f8f8f; border-bottom: 0; }
.on { background: linear-gradient(135deg, #4a6284, #6d8db3); outline: 1px solid #6b6b6b; outline-offset: -1px; }

.toolbar { display: flex; align-items: center; gap: 5px; flex: 0 0 32px; padding: 0 2px 0 11px; background: #2e2e2e; border-top: 1px solid #777; border-bottom: 1px solid #000; }
.sep { width: 1px; height: 24px; background: #5c5c5c; }

.view-row { display: flex; flex: 1; min-height: 0; }
.viewport { position: relative; flex: 1; min-width: 0; background: linear-gradient(#67828f, #788f99 20%, #869aa2 42%, #95a7ad 56%, #a4b3b8 73%, #b3c1c5); }
.pills { position: absolute; top: 5px; right: 5px; display: flex; gap: 6px; }
.pill { height: 20px; padding: 0 7px; border: 1px solid #b7c0c4; border-radius: 10px; color: #dfe5e8; font-size: 12px; line-height: 16px; background: #66798380; }
.pill::after { content: ""; display: inline-block; margin-left: 3px; vertical-align: 2px; border: 3px solid transparent; border-top-color: #fff; border-bottom: 0; }
.gridnum { font: bold 12px/12px "Noto Sans", sans-serif; fill: #7387a4; }

.sidebar { flex: 0 0 26px; display: flex; flex-direction: column; gap: 1px; padding: 0 1px; overflow: hidden; background: #3a3a3a; border-right: 1px solid #000; }
.side-tab { flex: 0 0 10px; border-bottom: 1px solid #000; background: linear-gradient(#5a5a5a, #333); }
.side-tab::after { content: ""; display: block; width: 0; margin-left: auto; border: 4px solid transparent; border-left: 6px solid #000; border-right: 0; }
.side-up { flex: 0 0 23px; display: grid; place-items: start center; }
.side-up svg { width: 18px; height: 18px; }
.side { position: relative; flex: 0 0 24px; display: grid; place-items: center; }
.side.more::after { content: ""; position: absolute; right: 0; bottom: 3px; border: 4px solid transparent; border-left-color: #8a8a8a; border-right: 0; }
.side.more.on::after { border-left-color: #1d1d1d; }
.side.num span { position: absolute; top: 2px; right: 3px; font: bold 10px/12px "Noto Sans CJK SC", sans-serif; color: #f0f0f0; }
.rule { flex: 0 0 1px; margin: 6px 0; background: #5c5c5c; }
.rule.near { margin: 1px 0; }

.splitter { background: #4a4a4a; border-right: 1px solid #2a2a2a; min-height: 0; overflow: hidden; }

.pathbar.right { padding: 1px 0 0 2px; gap: 6px; }
.nav { gap: 2px; }
.crumbs { align-items: center; padding-left: 6px; margin-right: 0; }
.crumbs .path-drop { align-self: stretch; }
.crumb { display: flex; align-items: center; gap: 5px; color: #d0d0d0; text-decoration: none; }
.crumb-icon { width: 17px; height: 18px; }
.chevron { width: 8px; height: 22px; margin: 0 6px; }
.edge { margin-right: -3px; gap: 2px; }

.menubar { display: flex; align-items: center; flex: 0 0 25px; background: linear-gradient(#3c3c3c, #313131); border-bottom: 1px solid #000; }
.handle { align-self: stretch; width: 10px; border: 1px solid #111; border-right-width: 2px; background: linear-gradient(#333, #555); }
.handle::after { content: ""; display: block; width: 0; margin: 2px auto 14px; border: 3px solid transparent; border-bottom: 5px solid #000; border-top: 0; }
.menus { display: flex; gap: 15px; padding-left: 8px; font-size: 12px; }
.tool-groups { display: flex; gap: 19px; margin: 0 -4px 0 auto; }
.tool-groups .tools { gap: 2px; }

.work { display: grid; grid-template-columns: 678fr 639fr; flex: 1; min-height: 0; }
.network { min-width: 0; min-height: 0; overflow: hidden; background: #303030; }
.context { font: bold 23px/30px "Noto Sans CJK SC", sans-serif; fill: #575757; }
.name { font-size: 15px; line-height: 18px; fill: #d2d2d2; }
.kind { font-size: 13px; fill: #646464; }
.info { font-size: 13px; fill: #6d9edb; }

.params { min-width: 0; overflow: hidden; background: #3a3a3a; border-bottom: 1px solid #262626; }
.params-head { display: flex; align-items: center; height: 27px; padding-left: 2px; border-bottom: 1px solid #000; }
.op { padding: 0 5px 0 2px; text-shadow: 1px 0 currentColor; }
.end-head { gap: 2px; margin-right: -2px; }
.field { flex: 1; min-width: 0; height: 22px; padding: 0 2px; background: #131313; border: 2px solid #2b2b2b; border-width: 2px 1px 1px 2px; }
.mono { padding-bottom: 2px; font: 14px/17px "Noto Sans Mono CJK SC", "DejaVu Sans Mono", monospace; color: #ececec; }
.bold, .expr { font-weight: bold; color: #fff; }
.expr { background: #478c48; }
.rows { display: flex; flex-direction: column; gap: 4px; padding: 4px 6px 0 16px; }
.row { display: flex; align-items: center; height: 22px; }
.row > :first-child { flex: 0 0 128px; margin-right: 9px; padding-right: 5px; text-align: right; }
.row.seed label { background: #555; }
.row.check { height: 16px; gap: 7px; }
.row.check > :first-child { margin-right: 2px; }
.row.spare { gap: 2px; }
.row.spare > :first-child { margin-right: 7px; }
.check input { appearance: none; width: 14px; height: 14px; background: #131313; border: 1px solid #2a2a2a; }
.drop { flex: 0 0 19px; height: 20px; margin-left: 1px; background: linear-gradient(#444, #2b2b2b); border: 1px solid #222; }
.drop.last { margin-right: 2px; }
.pick { margin: 0 2px 0 2px; }
.select { position: relative; display: flex; }
.select select { appearance: none; height: 22px; padding: 0 34px 0 14px; border: 1px solid #252525; background: linear-gradient(90deg, transparent calc(100% - 22px), #00000050 0), linear-gradient(#565656, #434343); }
.select::before, .select::after { content: ""; position: absolute; right: 7px; border: 3px solid transparent; pointer-events: none; }
.select::before { top: 4px; border-bottom: 6px solid #8f8f8f; border-top: 0; }
.select::after { bottom: 5px; border-top: 6px solid #8f8f8f; border-bottom: 0; }
.strong select { text-shadow: 1px 0 currentColor; }

.peek { position: absolute; right: 0; bottom: 0; width: 5px; height: 75px; border: 1px solid #44597a; border-right: 0; border-radius: 4px 0 0 0; background: #1d2431; }
.arrows { position: absolute; inset: 0; width: 100%; height: 100%; pointer-events: none; }
```

FILE: grid.js
```js
// Perspective floor: each family of lines fans out from its own vanishing point.
const grid = document.getElementById("grid");
const families = [
  { x: -314, y: 328, base: 412, step: 78 },
  { x: 737, y: 328, base: 258, step: 96 }
];
const depth = 2000;
for (const f of families) {
  for (let k = -60; k <= 60; k++) {
    const x600 = f.base + k * f.step;
    const endX = f.x + (x600 - f.x) * (depth - f.y) / (600 - f.y);
    const line = document.createElementNS("http://www.w3.org/2000/svg", "line");
    line.setAttribute("x1", f.x);
    line.setAttribute("y1", f.y);
    line.setAttribute("x2", endX);
    line.setAttribute("y2", depth);
    line.setAttribute("stroke", k % 5 === 0 ? "#82939b" : "#8497a0");
    line.setAttribute("stroke-width", k % 5 === 0 ? 2 : 1);
    grid.appendChild(line);
  }
}
```
